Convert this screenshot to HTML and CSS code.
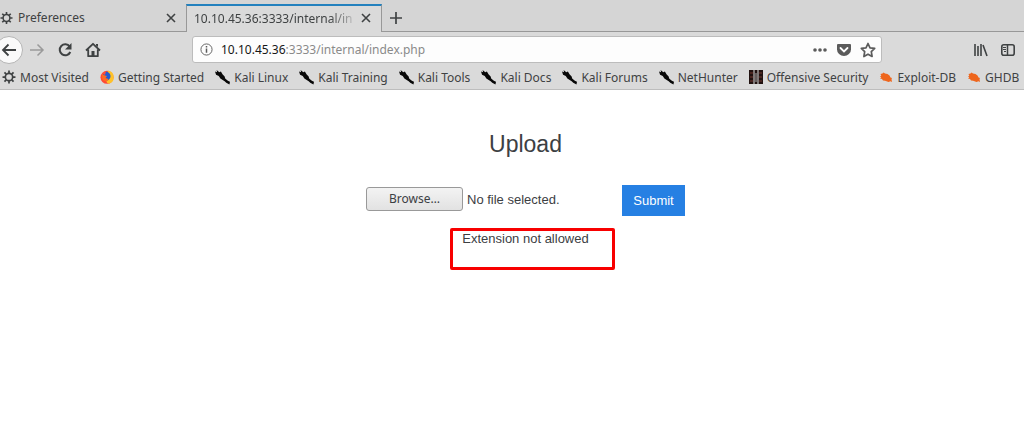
FILE: index.html
```html
<!DOCTYPE html>
<html lang="en">
<head>
<meta charset="utf-8">
<title>Upload</title>
<link rel="stylesheet" href="styles.css">
</head>
<body>
<svg class="defs" aria-hidden="true">
  <symbol id="gear" viewBox="0 0 16 16"><circle cx="8" cy="8" r="4.2" fill="none" stroke="currentColor" stroke-width="1.9"/><path d="M8 .6v3M8 12.4v3M.6 8h3M12.4 8h3M2.8 2.8l2 2M11.2 11.2l2 2M2.8 13.2l2-2M11.2 4.8l2-2" stroke="currentColor" stroke-width="2"/></symbol>
  <symbol id="close" viewBox="0 0 10 10"><path d="M1 1l8 8M9 1L1 9" stroke="currentColor" stroke-width="1.6"/></symbol>
  <symbol id="kali" viewBox="0 0 14 14"><path d="M0 1.500L2 2 1.500 0 4 2l1.500-.5L7 4l2 2 .5 2 2.500 2 2 1-.5 2.500-3-1.500L9 10.500 5 8 3.500 5.500 1 4.500z" fill="#080808"/></symbol>
  <symbol id="bug" viewBox="0 0 14 14"><path d="M1.500 4l2-.5L4.500 2.500l1.500 1 2.500.5 2 1.500 1 2 1.500.5-.5 1 .5 3-1.500-.7-2 .7-2-.7-1.500-.5-2-.4-1-1.500-2-.5 1.300-.8L1 6.500l1.300-.8z" fill="#ee661d"/></symbol>
</svg>
<header class="browser">
  <div class="tabs">
    <div class="tab tab-prefs">
      <svg class="gear"><use href="#gear"/></svg>
      <span class="tab-title">Preferences</span>
      <button class="icon-button" type="button" aria-label="Close Preferences"><svg class="close"><use href="#close"/></svg></button>
    </div>
    <div class="tab tab-active">
      <span class="tab-title fade">10.10.45.36:3333/internal/in</span>
      <button class="icon-button" type="button" aria-label="Close tab"><svg class="close"><use href="#close"/></svg></button>
    </div>
    <div class="tab-rest">
      <button class="icon-button" type="button" aria-label="New tab"><svg class="plus" viewBox="0 0 12 12"><path d="M6 0v12M0 6h12" stroke="currentColor" stroke-width="1.700"/></svg></button>
    </div>
  </div>
  <div class="nav">
    <div class="nav-buttons">
      <button class="icon-button back" type="button" aria-label="Back"><svg viewBox="0 0 16 16"><path d="M15 8H2M7.500 2.500L2 8l5.500 5.500" fill="none" stroke="currentColor" stroke-width="1.800"/></svg></button>
      <button class="icon-button forward" type="button" aria-label="Forward"><svg viewBox="0 0 16 16"><path d="M1 8h13M8.500 2.500L14 8l-5.500 5.500" fill="none" stroke="currentColor" stroke-width="1.500"/></svg></button>
      <button class="icon-button" type="button" aria-label="Reload"><svg viewBox="0 0 16 16"><path d="M12.700 4.600A5.500 5.500 0 1 0 13.300 10" fill="none" stroke="currentColor" stroke-width="2"/><path d="M14.500 1v6.500H8z" fill="currentColor"/></svg></button>
      <button class="icon-button" type="button" aria-label="Home"><svg viewBox="0 0 16 16"><path d="M1 8.500L8 1.800l7 6.700M3.200 7.500v6.700h9.600V7.500" fill="none" stroke="currentColor" stroke-width="1.800" stroke-linejoin="round"/><path d="M6.500 9h3v5h-3zM11 2h2v3l-2-1.500z" fill="currentColor"/></svg></button>
    </div>
    <div class="url-bar">
      <svg class="info" viewBox="0 0 14 14"><circle cx="7" cy="7" r="6" fill="none" stroke="currentColor"/><path d="M7 6v4.500M7 3.300v1.600" stroke="currentColor" stroke-width="1.600"/></svg>
      <div class="url" role="textbox" aria-label="Address" tabindex="0"><span class="host">10.10.45.36</span>:3333/internal/index.php</div>
      <button class="icon-button" type="button" aria-label="Page actions"><svg viewBox="0 0 16 16"><g fill="currentColor"><circle cx="3" cy="8" r="1.800"/><circle cx="8" cy="8" r="1.800"/><circle cx="13" cy="8" r="1.800"/></g></svg></button>
      <button class="icon-button" type="button" aria-label="Save to Pocket"><svg viewBox="0 0 16 16"><path d="M2 2h12q1 0 1 1v4.500a7 6.500 0 0 1-14 0V3q0-1 1-1z" fill="currentColor"/><path d="M4.500 6L8 9.500 11.500 6" fill="none" stroke="#fff" stroke-width="1.800" stroke-linecap="round"/></svg></button>
      <button class="icon-button" type="button" aria-label="Bookmark"><svg viewBox="0 0 16 16"><path d="M8 1.500l2 4.300 4.700.6-3.400 3.300.8 4.800L8 12.200l-4.100 2.300.8-4.800L1.300 6.400 6 5.800z" fill="none" stroke="currentColor" stroke-width="1.700" stroke-linejoin="round"/></svg></button>
    </div>
    <div class="nav-tools">
      <button class="icon-button" type="button" aria-label="Library"><svg viewBox="0 0 16 16"><path d="M3 2v12M6 4v10M9 2v12M11 3l4 11" stroke="currentColor" stroke-width="1.600"/></svg></button>
      <button class="icon-button" type="button" aria-label="Sidebars"><svg viewBox="0 0 16 16"><rect x="1.800" y="2.800" width="12.400" height="10.400" rx="2" fill="none" stroke="currentColor" stroke-width="1.600"/><path d="M7.500 3v10" stroke="currentColor" stroke-width="1.500"/><path d="M3 5.500h3M3 7.500h3M4 9.500h2" stroke="currentColor"/></svg></button>
    </div>
  </div>
  <nav class="bookmarks" aria-label="Bookmarks">
    <a href="#"><svg><use href="#gear"/></svg>Most Visited</a>
    <a href="#"><svg viewBox="0 0 14 14"><circle cx="7" cy="7.300" r="6.500" fill="#ff4a35"/><path d="M8 .5a6.800 6.800 0 0 1 1 13.200Q5 13 7 8z" fill="#ffc229"/><path d="M6 1.500q5 1 4.500 5.500Q9 11.500 5 10 2.500 8 3 4l2 1z" fill="#225bd0"/><path d="M2 4l3 1.500 2 .5-1.500 2 3 1q-1 3-4 2T2 4z" fill="#ff6b20"/></svg>Getting Started</a>
    <a href="#"><svg class="kali"><use href="#kali"/></svg>Kali Linux</a>
    <a href="#"><svg class="kali"><use href="#kali"/></svg>Kali Training</a>
    <a href="#"><svg class="kali"><use href="#kali"/></svg>Kali Tools</a>
    <a href="#"><svg class="kali"><use href="#kali"/></svg>Kali Docs</a>
    <a href="#"><svg class="kali"><use href="#kali"/></svg>Kali Forums</a>
    <a href="#"><svg class="kali"><use href="#kali"/></svg>NetHunter</a>
    <a href="#"><svg viewBox="0 0 14 14"><path d="M0 0h14v14H0z" fill="#211210"/><path d="M1 3h3M1 7h3M1 11h3M10 3h3M10 7h3M10 11h3" stroke="#4a2520" stroke-width="2"/><path d="M4.500 0h1v14h-1zM8.500 0h1v14h-1z" fill="#ddd"/><path d="M7 3v9" stroke="#aaa"/></svg>Offensive Security</a>
    <a href="#"><svg><use href="#bug"/></svg>Exploit-DB</a>
    <a href="#"><svg><use href="#bug"/></svg>GHDB</a>
  </nav>
</header>
<main class="page">
  <h1>Upload</h1>
  <form class="upload">
    <div class="picker">
      <input class="file" type="file" id="file">
      <label class="browse" for="file">Browse…</label>
      <span>No file selected.</span>
    </div>
    <button class="submit" type="submit">Submit</button>
  </form>
  <p class="message">Extension not allowed<span class="highlight"></span></p>
</main>
</body>
</html>
```
FILE: styles.css
```css
* { box-sizing: border-box; }
body { display: flex; flex-direction: column; min-height: 100vh; margin: 0; background: #fff; color: #3c4043; font-family: "Liberation Sans", Arial, sans-serif; font-size: 13px; }
.defs { position: absolute; width: 0; height: 0; }
.browser { background: #dadada; color: #3f4243; font-family: "Noto Sans", sans-serif; font-size: 12px; border-bottom: 1px solid #bdbdbd; }
.icon-button { display: flex; flex: none; padding: 0; border: 0; background: none; color: inherit; }
.icon-button svg { width: 16px; height: 16px; }
.icon-button .close { width: 10px; height: 10px; }
.icon-button .plus { width: 12px; height: 12px; }
.tabs { display: flex; height: 32px; padding-top: 4px; background: #d5d5d5; }
.tab { display: flex; align-items: center; gap: 5px; }
.tab-prefs { width: 186px; padding-right: 10px; border-bottom: 1px solid #989898; }
.gear { width: 13px; height: 14px; flex: none; }
.tab-title { flex: 1; white-space: nowrap; }
.tab-active { gap: 2px; width: 196px; padding: 0 10px 2px 7px; background: #dadada; border: solid #989898; border-width: 0 1px; border-top: 2px solid #2381be; }
.fade { mask-image: linear-gradient(to right, #000 82%, transparent); }
.tab-rest { display: flex; flex: 1; align-items: center; padding-left: 8px; border-bottom: 1px solid #989898; }
.nav { display: flex; align-items: center; height: 35px; padding-right: 8px; }
.nav-buttons { display: flex; align-items: center; gap: 12px; width: 192px; }
.back { width: 28px; height: 28px; margin-left: -5px; align-items: center; justify-content: center; border: 1px solid #b5b5b5; border-radius: 50%; background: #fafafa; }
.forward { color: #9a9a9a; margin-left: -6px; }
.url-bar { display: flex; flex: 1; align-items: center; gap: 8px; height: 27px; padding: 0 5px 0 7px; border: 1px solid #bcbcbc; border-radius: 3px; background: #fdfdfd; color: #5b5b5b; }
.info { width: 13px; height: 13px; }
.url { flex: 1; color: #8a8a8a; white-space: nowrap; }
.host { color: #171717; }
.nav-tools { display: flex; gap: 12px; margin-left: 90px; }
.bookmarks { display: flex; gap: 11px; height: 22px; padding: 0 0 2px 2px; align-items: center; overflow: hidden; }
.bookmarks a { display: flex; flex: none; align-items: center; gap: 4px; color: inherit; text-decoration: none; white-space: nowrap; }
.bookmarks svg { width: 14px; height: 14px; }
.bookmarks .kali { width: 15px; height: 15px; }
.page { display: flex; flex: 1; flex-direction: column; align-items: center; padding: 40px 0 0 27px; }
h1 { margin: 0; font-size: 23px; line-height: 28px; font-weight: 400; }
.upload { display: flex; gap: 4px; margin-top: 27px; }
.picker { display: flex; width: 252px; height: 28px; align-items: center; gap: 4px; }
.file { position: absolute; width: 1px; height: 1px; opacity: 0; }
.browse { width: 97px; height: 24px; border: 1px solid #999; border-radius: 3px; background: linear-gradient(#f3f3f3, #e2e2e2); font: 12px/22px "Noto Sans", sans-serif; text-align: center; }
.submit { width: 63px; height: 31px; padding: 0; border: 0; background: #2680e3; color: #fff; font: 13px "Liberation Sans", Arial, sans-serif; }
.message { position: relative; margin: 15px 0 0; line-height: 16px; }
.highlight { position: absolute; top: -3px; left: -12px; right: -26px; height: 42px; border: 3px solid #f80000; border-radius: 2px; }
```
